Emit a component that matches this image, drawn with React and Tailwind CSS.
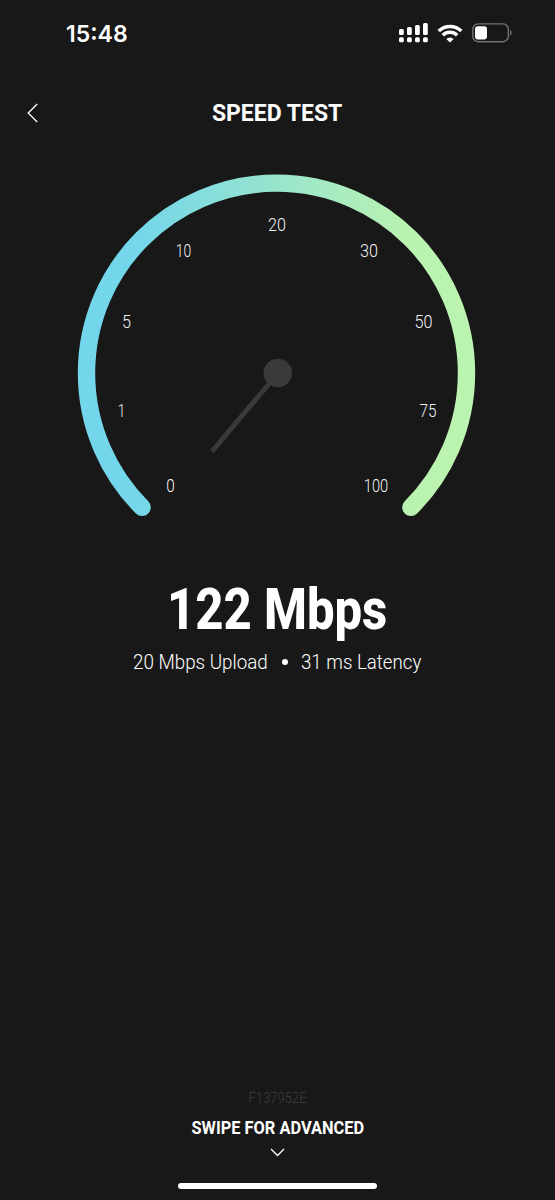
import { useState } from "react";

const TICKS = [
  { label: "0", x: 170.5, y: 492, width: 8.5 },
  { label: "1", x: 121.5, y: 417, width: 7.5 },
  { label: "5", x: 126.5, y: 328, width: 9 },
  { label: "10", x: 183.5, y: 257.3, width: 15.5 },
  { label: "20", x: 277, y: 230.7, width: 18 },
  { label: "30", x: 369, y: 257.3, width: 18 },
  { label: "50", x: 423.5, y: 328, width: 18 },
  { label: "75", x: 428, y: 417, width: 17 },
  { label: "100", x: 376, y: 492, width: 24.5 },
];

const SIGNAL_BARS = [
  { x: 0, y: 6, height: 6 },
  { x: 8, y: 4, height: 8 },
  { x: 16, y: 2, height: 10 },
  { x: 24, y: 0, height: 12 },
];

const StatusBar = () => {
  return (
    <header className="flex h-[66px] shrink-0 items-center justify-between pl-[66px] pr-[42px]">
      <span className="origin-left scale-x-[0.98] pt-px font-[Inter] text-[23.5px] font-semibold leading-none text-white">
        15:48
      </span>
      <div className="flex items-center gap-[9px]">
        <svg width="29" height="20" viewBox="0 0 29 20" fill="#fff">
          {SIGNAL_BARS.map((bar) => (
            <g key={bar.x}>
              <rect x={bar.x} y={bar.y} width="4.8" height={bar.height} rx="1.5" />
              <rect x={bar.x} y="14.2" width="4.8" height="5" rx="1.5" />
            </g>
          ))}
        </svg>
        <svg width="26" height="19" viewBox="0 0 26 19" fill="none" stroke="#fff" strokeWidth="3.5">
          <path d="M1.7 7.1a16 16 0 0 1 22.6 0" />
          <path d="M5.8 11.3a10.2 10.2 0 0 1 14.4 0" />
          <path d="M13 18.6 9.3 14.9a5.3 5.3 0 0 1 7.4 0z" fill="#fff" stroke="none" />
        </svg>
        <svg width="41" height="20" viewBox="0 0 41 20" fill="none">
          <rect x="0.8" y="0.9" width="35.6" height="17.8" rx="5.4" stroke="#737373" strokeWidth="1.4" />
          <rect x="3" y="3.2" width="12" height="13.2" rx="2.8" fill="#fff" />
          <path d="M38.2 6.8c1.9.7 1.9 5.3 0 6z" fill="#737373" />
        </svg>
      </div>
    </header>
  );
};

const Gauge = () => {
  return (
    <svg className="h-[360px] w-full shrink-0" viewBox="0 165 555 360" fill="none">
      <defs>
        <linearGradient id="speed" gradientUnits="userSpaceOnUse" x1="122" y1="373" x2="420" y2="373">
          <stop offset="0" stopColor="#74d6eb" />
          <stop offset="0.08" stopColor="#76d7e9" />
          <stop offset="0.95" stopColor="#b9f2b1" />
          <stop offset="1" stopColor="#bbf3b0" />
        </linearGradient>
      </defs>
      <path d="M142.1 507.4a190 190 0 1 1 268.8 0" stroke="url(#speed)" strokeWidth="17.4" strokeLinecap="round" />
      <path d="M278 373 212 451.5" stroke="#3a3a3a" strokeWidth="5" />
      <circle cx="277.8" cy="373" r="14.3" fill="#3a3a3a" />
      <g className="font-[Roboto] font-[360]" fill="#f2f2f2" fontSize="17.9" textAnchor="middle">
        {TICKS.map((tick) => (
          <text key={tick.label} x={tick.x} y={tick.y} textLength={tick.width} lengthAdjust="spacingAndGlyphs">
            {tick.label}
          </text>
        ))}
      </g>
    </svg>
  );
};

const App = () => {
  const [result] = useState({ download: 122, upload: 20, latency: 31 });

  return (
    <main className="flex h-[1200px] w-[555px] flex-col overflow-hidden bg-[#181818] font-[Roboto,sans-serif] text-white">
      <StatusBar />

      <div className="grid h-[99px] shrink-0 grid-cols-[100px_1fr_100px] items-center pb-[5px]">
        <button className="pl-[27px]" aria-label="Back">
          <svg width="12" height="20" viewBox="0 0 12 20" fill="none" stroke="#fff" strokeWidth="1.3">
            <path d="m10.2 1-9 9 9 9" />
          </svg>
        </button>
        <h1 className="flex justify-center">
          <span className="scale-x-[0.957] whitespace-nowrap text-[24px] font-bold leading-7">SPEED TEST</span>
        </h1>
      </div>

      <Gauge />

      <section className="flex flex-col items-center pt-[52px]">
        <p className="scale-x-[0.86] whitespace-nowrap text-[57px] font-extrabold leading-[66px]">
          {result.download} Mbps
        </p>
        <div className="mt-[7px] flex h-6 w-[289px] items-center justify-between text-[20px] font-[350] leading-6 text-white">
          <span className="w-[135px] origin-left scale-x-[0.94] whitespace-nowrap">{result.upload} Mbps Upload</span>
          <span className="size-[6px] rounded-full bg-white" />
          <span className="w-[121px] origin-left scale-x-[0.935] whitespace-nowrap">{result.latency} ms Latency</span>
        </div>
      </section>

      <footer className="mt-auto flex flex-col items-center pb-[11px]">
        <span className="scale-x-[0.84] text-[15.5px] font-[350] leading-5 text-[#404040]">F137952E</span>
        <span className="mt-[9px] scale-x-[0.91] whitespace-nowrap text-[18px] font-bold leading-[22px]">
          SWIPE FOR ADVANCED
        </span>
        <svg className="mt-[9px]" width="15" height="9" viewBox="0 0 15 9" fill="none" stroke="#fff" strokeWidth="1.3">
          <path d="m1 1 6.5 6.5L14 1" />
        </svg>
        <div className="mt-[26px] h-[6.5px] w-[199px] rounded-full bg-white" />
      </footer>
    </main>
  );
};

export default App;
